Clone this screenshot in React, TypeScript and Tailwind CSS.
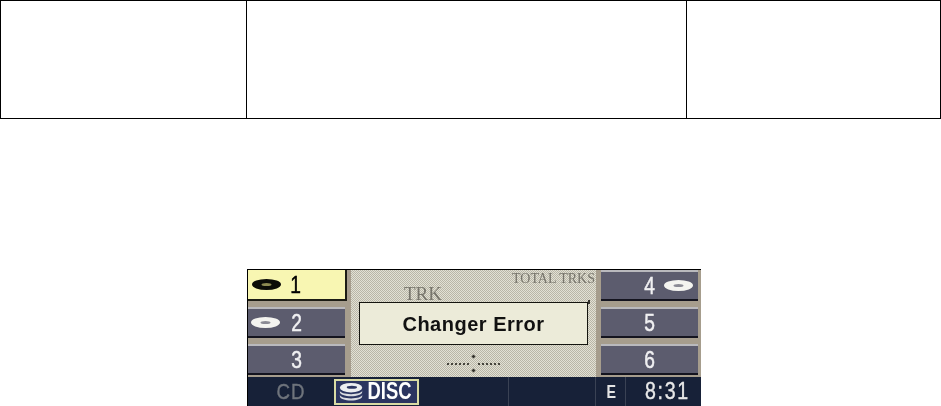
const hatch =
  "bg-[repeating-conic-gradient(#b9b6a7_0_25%,#e2e1d5_0_50%)] bg-[length:2px_2px]";

function Disc({ dark = false }: { dark?: boolean }) {
  return (
    <svg width="29" height="11" viewBox="0 0 29 11" className="blur-[0.4px]">
      <ellipse cx="14.500" cy="5.500" rx="14.500" ry="5.500" fill={dark ? "#0c0c08" : "#f4f4f0"} />
      <ellipse cx="14.500" cy="5.500" rx="5" ry="1.600" fill={dark ? "#8d8a52" : "#8b8b95"} />
    </svg>
  );
}

function DiscStack() {
  return (
    <svg width="28" height="22" viewBox="0 0 28 22" className="blur-[0.3px]">
      <path d="M1 16c0 3 6 5 13 5s13-2 13-5v-2c0 3-6 4.500-13 4.500S1 17 1 14z" fill="#d9dbe0" />
      <path d="M1 11c0 3 6 5 13 5s13-2 13-5V9c0 3-6 4.500-13 4.500S1 12 1 9z" fill="#d9dbe0" />
      <ellipse cx="14" cy="6" rx="13" ry="5.500" fill="#eceef0" />
      <ellipse cx="15" cy="5.500" rx="6" ry="1.800" fill="#2b3560" />
    </svg>
  );
}

function PresetButton({ label, disc, side }: { label: string; disc?: boolean; side: "left" | "right" }) {
  return (
    <div className="relative flex h-[31px] w-[97px] items-center justify-center border-t-2 border-b-2 border-t-[#b9b9bd] border-b-[#14141f] bg-[#5c5c6e] text-[#f0f0f2]">
      {disc && (
        <div className={side === "left" ? "absolute top-[8px] left-[3px] flex" : "absolute top-[8px] right-[5px] flex"}>
          <Disc />
        </div>
      )}
      <span className="scale-x-[0.8] text-[24px] leading-none font-['Liberation_Sans',sans-serif] blur-[0.4px] [-webkit-text-stroke:0.5px_#f0f0f2]">
        {label}
      </span>
    </div>
  );
}

function Divider() {
  return (
    <div className="mt-[10px] flex items-center justify-center gap-[3px]">
      <div className="h-[2px] w-[22px] border-b-2 border-dotted border-[#45443c]" />
      <div className="flex flex-col gap-[11px]">
        <div className="size-[3px] rotate-45 bg-[#33322c]" />
        <div className="size-[3px] rotate-45 bg-[#33322c]" />
      </div>
      <div className="h-[2px] w-[22px] border-b-2 border-dotted border-[#45443c]" />
    </div>
  );
}

export default function App() {
  return (
    <div className="h-[406px] w-[941px] overflow-hidden bg-white">
      {/* empty table above the photo */}
      <div className="flex h-[119px] w-[941px] border border-black">
        <div className="w-[246px] border-r border-black" />
        <div className="w-[440px] border-r border-black" />
        <div className="flex-1" />
      </div>

      {/* radio display */}
      <div className="mt-[150px] ml-[247px] flex h-[137px] w-[454px] flex-col border-t border-l border-black bg-[#a69d8d]">
        <div className="flex h-[107px]">
          <div className="flex w-[103px] flex-col">
            <div className="relative flex h-[31px] w-[99px] items-center justify-center border-r-2 border-b-2 border-[#1c1c14] bg-[#f8f6b2] pr-[2px] text-black">
              <div className="absolute top-[9px] left-[4px] flex">
                <Disc dark />
              </div>
              <span className="scale-x-[0.8] text-[24px] leading-none font-['Liberation_Sans',sans-serif] blur-[0.3px] [-webkit-text-stroke:0.5px_black]">1</span>
            </div>
            <div className="mt-[6px] flex flex-col gap-[6px]">
              <PresetButton label="2" disc side="left" />
              <PresetButton label="3" side="left" />
            </div>
          </div>

          <div className={`flex w-[245px] flex-col ${hatch}`}>
            <div className="relative h-[32px]">
              <span className="absolute top-[14px] left-[53px] text-[19px] leading-none text-[#77756c] font-['Liberation_Serif',serif] blur-[0.3px]">
                TRK
              </span>
              <span className="absolute top-[2px] right-[1px] text-[14px] leading-none text-[#77756c] font-['Liberation_Serif',serif] blur-[0.2px]">
                TOTAL TRKS
              </span>
            </div>
            <div className="relative mx-auto flex h-[43px] w-[229px] items-center justify-center border border-[#14140f] bg-[#ecebd9] text-[20px] tracking-[0.5px] font-bold text-[#111] font-['Liberation_Sans',sans-serif]">
              <span className="blur-[0.3px]">Changer Error</span>
              <div className="absolute -top-[3px] -right-[3px] h-[4px] w-[2px] bg-[#33322c]" />
            </div>
            <Divider />
          </div>

          <div className="ml-[5px] flex w-[97px] flex-col gap-[6px]">
            <PresetButton label="4" disc side="right" />
            <PresetButton label="5" side="right" />
            <PresetButton label="6" side="right" />
          </div>
        </div>

        {/* bottom status bar */}
        <div className="flex h-[29px] items-center bg-[#172138] font-['Liberation_Sans',sans-serif]">
          <div className="flex w-[86px] justify-center">
            <span className="scale-x-[0.85] text-[22px] leading-none tracking-[1px] text-[#6f747c] blur-[0.3px] [-webkit-text-stroke:0.4px_#6f747c]">CD</span>
          </div>
          <div className="flex h-[26px] w-[85px] items-center gap-[2px] border-2 border-[#d9dba4] bg-[#2b3560] pl-[3px] text-white">
            <DiscStack />
            <span className="-ml-[3px] scale-x-[0.8] text-[23px] leading-none font-bold blur-[0.3px]">DISC</span>
          </div>
          <div className="h-full w-[90px] border-r border-[#3a4254]" />
          <div className="h-full w-[87px] border-r border-[#3a4254]" />
          <div className="flex h-full w-[30px] items-center justify-center border-r border-[#3a4254] pl-[1px]">
            <span className="scale-x-[0.75] text-[19px] leading-none font-bold text-[#e4e4e4] blur-[0.3px]">E</span>
          </div>
          <div className="flex flex-1 justify-center pl-[8px]">
            <span className="scale-x-[0.85] text-[23px] leading-none tracking-[2px] text-[#e8e8e8] blur-[0.3px] [-webkit-text-stroke:0.4px_#e8e8e8]">8:31</span>
          </div>
        </div>
      </div>
    </div>
  );
}
